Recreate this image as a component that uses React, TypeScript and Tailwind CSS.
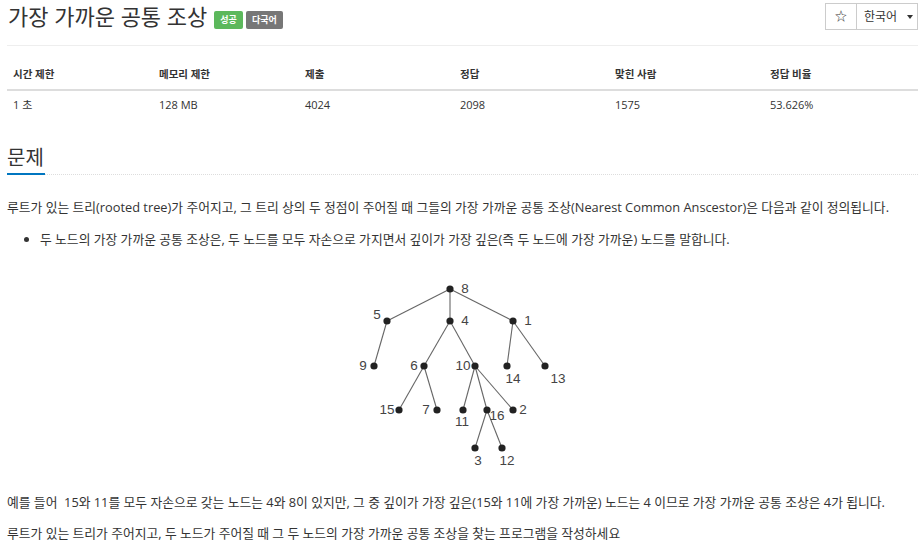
import React from "react";

const F = { fontFamily: '"Open Sans", "Noto Sans CJK KR", sans-serif' };

function Tree() {
  const nodes: Record<string, [number, number]> = {
    n8: [450, 287],
    n5: [387, 319],
    n4: [450, 319],
    n1: [513, 319],
    n9: [374, 364],
    n6: [424, 364],
    n10: [475, 364],
    n14: [507, 364],
    n13: [545, 364],
    n15: [399, 408],
    n7: [437, 408],
    n11: [463, 408],
    n16: [487, 408],
    n2: [513, 408],
    n3: [475, 446],
    n12: [502, 446],
  };
  const edges: [string, string][] = [
    ["n8", "n5"], ["n8", "n4"], ["n8", "n1"],
    ["n5", "n9"], ["n4", "n6"], ["n4", "n10"],
    ["n1", "n14"], ["n1", "n13"],
    ["n6", "n15"], ["n6", "n7"],
    ["n10", "n11"], ["n10", "n16"], ["n10", "n2"],
    ["n16", "n3"], ["n16", "n12"],
  ];
  const labels: [string, number, number][] = [
    ["8", 465, 291], ["5", 377, 317], ["4", 465, 323], ["1", 528, 323],
    ["9", 363, 368], ["6", 414, 368], ["10", 463, 368], ["14", 513, 381], ["13", 558, 381],
    ["15", 387, 412], ["7", 426, 412], ["11", 462, 424], ["16", 497, 418], ["2", 523, 412],
    ["3", 478, 463], ["12", 507, 463],
  ];
  return (
    <svg width="225" height="194" viewBox="350 276 225 194" className="block mx-auto">
      {edges.map(([a, b], i) => (
        <line key={i} x1={nodes[a][0]} y1={nodes[a][1]} x2={nodes[b][0]} y2={nodes[b][1]} stroke="#666" strokeWidth="1.1" />
      ))}
      {Object.entries(nodes).map(([k, [x, y]]) => (
        <circle key={k} cx={x} cy={y} r="3.6" fill="#222" />
      ))}
      {labels.map(([t, x, y]) => (
        <text key={t} x={x} y={y} textAnchor="middle" fontSize="13.5" fill="#444" fontFamily='"Liberation Sans", Arial, sans-serif'>
          {t}
        </text>
      ))}
    </svg>
  );
}

export default function App() {
  const cols = ["시간 제한", "메모리 제한", "제출", "정답", "맞힌 사람", "정답 비율"];
  const vals = ["1 초", "128 MB", "4024", "2098", "1575", "53.626%"];
  const grid = "grid grid-cols-[146px_146px_155px_155px_155px_1fr]";
  return (
    <div style={F} className="w-[923px] h-[542px] overflow-hidden bg-white text-[#333] pl-[7px] pr-[5px]">
      {/* header */}
      <div className="flex items-start justify-between h-[46px] border-b border-[#eee]">
        <div className="flex items-center mt-[1px]">
          <h1 className="text-[22px] leading-[30px] font-normal text-[#333] ml-[1px]">가장 가까운 공통 조상</h1>
          <span className="ml-[7px] mt-[8px] bg-[#5cb85c] text-white text-[9px] font-bold h-[18px] px-[6px] flex items-center rounded-[2px]">성공</span>
          <span className="ml-[3px] mt-[8px] bg-[#777] text-white text-[9px] font-bold h-[18px] px-[6px] flex items-center rounded-[2px]">다국어</span>
        </div>
        <div className="flex mt-[3px]">
          <div className="w-[32px] h-[27px] border border-[#ccc] flex items-center justify-center text-[12px] text-[#333]">☆</div>
          <div className="w-[61px] h-[27px] border border-[#ccc] border-l-0 flex items-center pl-[7px] text-[12px] text-[#333]">
            한국어
            <span className="ml-[10px] inline-block w-0 h-0 border-l-[3px] border-r-[3px] border-t-[4px] border-l-transparent border-r-transparent border-t-[#333]" />
          </div>
        </div>
      </div>

      {/* table */}
      <div className="mt-[15px] text-[11px]">
        <div className={`${grid} h-[30px] items-center border-b-2 border-[#ddd] font-bold text-[10.5px]`}>
          {cols.map((c) => (
            <div key={c} className="pl-[6px]">{c}</div>
          ))}
        </div>
        <div className={`${grid} h-[29px] items-center`}>
          {vals.map((c) => (
            <div key={c} className="pl-[6px]">{c}</div>
          ))}
        </div>
      </div>

      {/* section */}
      <div className="mt-[24px] flex border-b border-dotted border-[#ddd]">
        <h2 className="text-[20px] leading-[28px] font-normal text-[#333] border-b-2 border-[#0076c0] pb-[1px] mb-[-1px] pr-[1px]">문제</h2>
      </div>

      <div className="text-[12.8px] leading-[20px] text-[#333]">
        <p className="mt-[22px]">루트가 있는 트리(rooted tree)가 주어지고, 그 트리 상의 두 정점이 주어질 때 그들의 가장 가까운 공통 조상(Nearest Common Anscestor)은 다음과 같이 정의됩니다.</p>
        <ul className="mt-[12px] pl-[33px] list-disc">
          <li>두 노드의 가장 가까운 공통 조상은, 두 노드를 모두 자손으로 가지면서 깊이가 가장 깊은(즉 두 노드에 가장 가까운) 노드를 말합니다.</li>
        </ul>
        <div className="mt-[29px]">
          <Tree />
        </div>
        <p className="mt-[20px]">예를 들어&nbsp; 15와 11를 모두 자손으로 갖는 노드는 4와 8이 있지만, 그 중 깊이가 가장 깊은(15와 11에 가장 가까운) 노드는 4 이므로 가장 가까운 공통 조상은 4가 됩니다.</p>
        <p className="mt-[11px]">루트가 있는 트리가 주어지고, 두 노드가 주어질 때 그 두 노드의 가장 가까운 공통 조상을 찾는 프로그램을 작성하세요</p>
      </div>
    </div>
  );
}
